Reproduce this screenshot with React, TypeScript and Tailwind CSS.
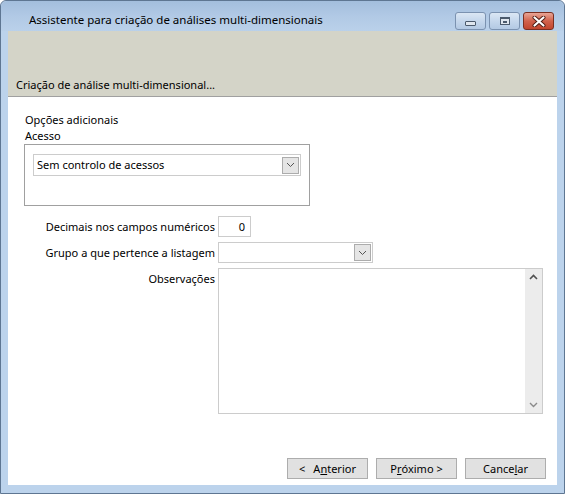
import React from "react";

const font = { fontFamily: '"Noto Sans", "Open Sans", sans-serif' };

function Chevron() {
  return (
    <svg width="9" height="6" viewBox="0 0 9 6">
      <path d="M1 1 L4.5 4.5 L8 1" fill="none" stroke="#555" strokeWidth="1" />
    </svg>
  );
}

function DropBtn() {
  return (
    <div className="w-[17px] h-[17px] m-[1px] border border-[#acacac] bg-[#e5e5e5] flex items-center justify-center">
      <Chevron />
    </div>
  );
}

function Btn({ children }: { children: React.ReactNode }) {
  return (
    <div className="h-[21px] w-[81px] border border-[#adadad] bg-[#e1e1e1] flex items-center justify-center text-[11px] text-black">
      {children}
    </div>
  );
}

export default function App() {
  return (
    <div style={font} className="w-[565px] h-[495px] bg-white">
      <div className="w-[565px] h-[494px] border border-[#5e7692] rounded-t-[6px] bg-[#bcd3ec] flex flex-col px-[7px] pb-[8px]">
        {/* title bar */}
        <div className="h-[30px] -mx-[7px] px-[7px] rounded-t-[6px] bg-gradient-to-b from-[#a3bedd] via-[#b1c9e5] to-[#bad1ea] flex items-start">
          <div className="pl-[21px] pt-[11px] text-[11.5px] leading-[16px] text-black">
            Assistente para criação de análises multi-dimensionais
          </div>
          <div className="ml-auto mt-[11px] flex gap-[3px] pr-[3px]">
            <div className="w-[31px] h-[18px] rounded-[3px] border border-[#7b92b0] bg-gradient-to-b from-[#dbe7f4] via-[#c5d7ec] to-[#b3c9e3] flex items-center justify-center">
              <div className="w-[11px] h-[5px] rounded-[1px] border border-[#4b5a6c] bg-[#dfe6ee] mt-[4px]" />
            </div>
            <div className="w-[31px] h-[18px] rounded-[3px] border border-[#7b92b0] bg-gradient-to-b from-[#dbe7f4] via-[#c5d7ec] to-[#b3c9e3] flex items-center justify-center">
              <div className="w-[10px] h-[8px] border border-[#4b5a6c] border-t-[2px] bg-[#dfe6ee] flex items-center justify-center">
                <div className="w-[4px] h-[2px] bg-[#4b5a6c]" />
              </div>
            </div>
            <div className="w-[31px] h-[18px] rounded-[3px] border border-[#7a2f21] bg-gradient-to-b from-[#e8a596] via-[#d1624c] to-[#c2452d] flex items-center justify-center">
              <svg width="14" height="11" viewBox="0 0 14 11">
                <path d="M2.5 1.5 L11.5 9.5 M11.5 1.5 L2.5 9.5" stroke="#4a1a12" strokeWidth="4" strokeLinecap="round" />
                <path d="M2.5 1.5 L11.5 9.5 M11.5 1.5 L2.5 9.5" stroke="#ffffff" strokeWidth="2.2" strokeLinecap="round" />
              </svg>
            </div>
          </div>
        </div>

        {/* client */}
        <div className="flex-1 bg-white flex flex-col">
          <div className="h-[66px] bg-[#d4d4c8] border-b border-[#a0a0a0] flex items-end pl-[8px] pb-[3px] text-[11px] leading-[16px] text-black">
            Criação de análise multi-dimensional...
          </div>

          <div className="flex-1 flex flex-col text-[11px] leading-[16px] text-black">
            <div className="pl-[17px] mt-[15px]">Opções adicionais</div>
            <div className="pl-[17px]">Acesso</div>
            <div className="ml-[16px] w-[286px] h-[62px] border border-[#a0a0a0] pt-[9px] pl-[8px]">
              <div className="w-[268px] h-[22px] border border-[#cccccc] flex items-center">
                <span className="pl-[3px] flex-1">Sem controlo de acessos</span>
                <DropBtn />
              </div>
            </div>

            <div className="grid grid-cols-[207px_auto] gap-x-[3px] mt-[10px]">
              <div className="h-[21px] flex items-center justify-end">Decimais nos campos numéricos</div>
              <div className="w-[33px] h-[21px] border border-[#cccccc] flex items-center justify-end pr-[5px]">0</div>

              <div className="mt-[5px] h-[21px] flex items-center justify-end">Grupo a que pertence a listagem</div>
              <div className="mt-[5px] w-[155px] h-[21px] border border-[#cccccc] flex items-center justify-end">
                <DropBtn />
              </div>

              <div className="mt-[5px] pt-[3px] flex justify-end">Observações</div>
              <div className="mt-[5px] w-[325px] h-[146px] border border-[#cccccc] flex justify-end">
                <div className="w-[17px] h-full bg-[#ececec] flex flex-col items-center justify-between py-[5px]">
                  <svg width="9" height="6" viewBox="0 0 9 6">
                    <path d="M1 5 L4.5 1.5 L8 5" fill="none" stroke="#505050" strokeWidth="1.6" />
                  </svg>
                  <svg width="9" height="6" viewBox="0 0 9 6">
                    <path d="M1 1 L4.5 4.5 L8 1" fill="none" stroke="#8a8a8a" strokeWidth="1.4" />
                  </svg>
                </div>
              </div>
            </div>

            <div className="mt-auto mb-[6px] flex justify-end gap-[8px] pr-[11px]">
              <Btn>
                <span className="mr-[8px]">&lt;</span>A<span className="underline">n</span>terior
              </Btn>
              <Btn>
                P<span className="underline">r</span>óximo &gt;
              </Btn>
              <Btn>
                Cance<span className="underline">l</span>ar
              </Btn>
            </div>
          </div>
        </div>
      </div>
    </div>
  );
}
